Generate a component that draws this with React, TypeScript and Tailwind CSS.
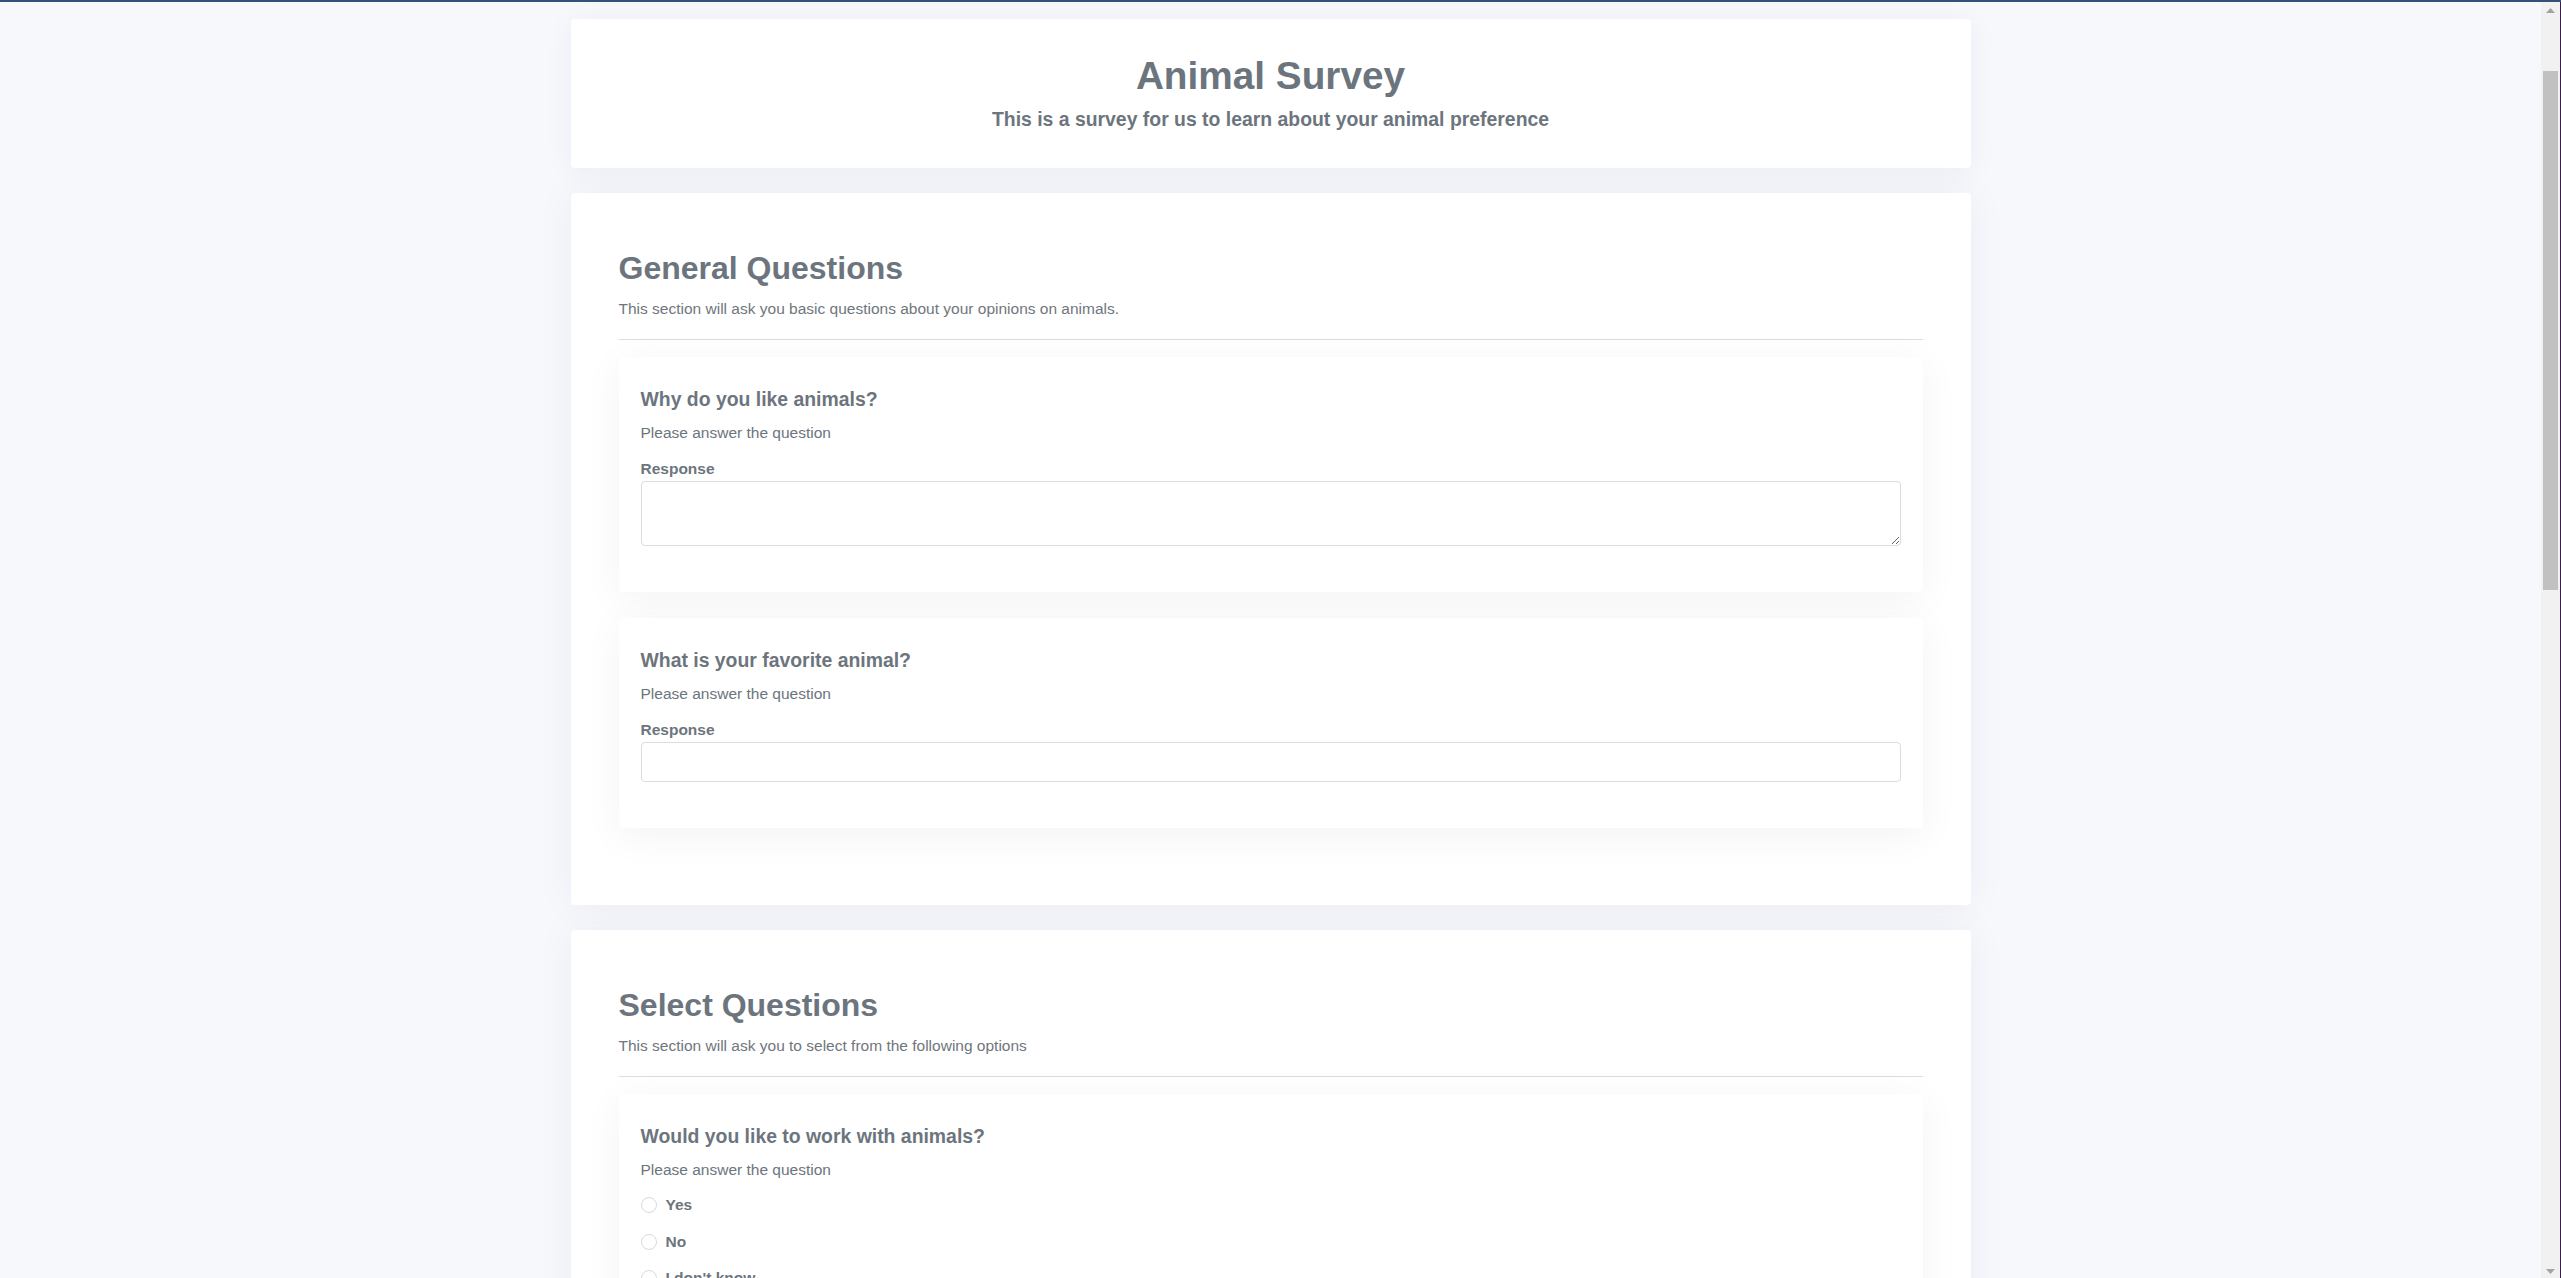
import React from "react";

const questionsGeneral = [
  { title: "Why do you like animals?", kind: "textarea" },
  { title: "What is your favorite animal?", kind: "input" },
];

function QuestionCard({ title, children }: { title: string; children: React.ReactNode }) {
  return (
    <div className="bg-white rounded-[4px] px-[22px] pt-[30px] pb-[46px] mb-[26px] shadow-[0_8px_40px_rgba(0,0,0,0.05)]">
      <h3 className="text-[19.4px] leading-[24px] font-bold text-[#6c757d]">{title}</h3>
      <p className="mt-[12px] text-[15.5px] leading-[20px] text-[#6c757d]">Please answer the question</p>
      {children}
    </div>
  );
}

function Section({ title, description, children }: { title: string; description: string; children: React.ReactNode }) {
  return (
    <section className="bg-white rounded-[4px] px-12 pt-[57px] pb-[51px] shadow-[0_0_40px_rgba(20,30,80,0.05)] flow-root">
      <h2 className="text-[32px] leading-[36px] font-bold text-[#6c757d]">{title}</h2>
      <p className="mt-[13px] text-[15.5px] leading-[20px] text-[#6f767d]">{description}</p>
      <hr className="mt-[20px] mb-[17px] border-0 h-px bg-[#dddddd]" />
      {children}
    </section>
  );
}

function Radio({ label }: { label: string }) {
  return (
    <label className="flex items-center h-5 gap-[9px]">
      <input type="radio" name="work" className="appearance-none w-4 h-4 rounded-full border border-[#d6d9de] bg-white" />
      <span className="text-[15.5px] font-bold text-[#6c757d]">{label}</span>
    </label>
  );
}

function Scrollbar() {
  return (
    <div className="flex h-screen shrink-0">
      <div className="w-[19px] flex flex-col bg-[#f1f1f1]">
        <div className="h-[17px] flex items-center justify-center">
          <svg width="9" height="5" viewBox="0 0 9 5"><path d="M0 5 L4.5 0 L9 5 Z" fill="#a3a3a3" /></svg>
        </div>
        <div className="flex-1 pt-[52px] px-[2px]">
          <div className="h-[519px] bg-[#c1c1c1]" />
        </div>
        <div className="h-[17px] flex items-center justify-center">
          <svg width="9" height="5" viewBox="0 0 9 5"><path d="M0 0 L4.5 5 L9 0 Z" fill="#a3a3a3" /></svg>
        </div>
      </div>
      <div className="w-px bg-[#3b1d4a]" />
    </div>
  );
}

export default function App() {
  return (
    <div className="h-screen flex border-t-2 border-[#36507a] bg-[#f7f8fc] font-['Liberation_Sans',Arial,sans-serif]">
      <div className="flex-1 overflow-hidden">
        <div className="w-[1400px] mx-auto pt-[17px] pb-20 flex flex-col gap-[25px]">
          <header className="bg-white rounded-[4px] pt-[35px] pb-[37px] text-center text-[#6c757d] shadow-[0_4px_30px_rgba(20,30,80,0.05)]">
            <h1 className="text-[38.75px] leading-[44px] font-bold">Animal Survey</h1>
            <p className="mt-[9px] text-[19.4px] leading-[24px] font-bold">This is a survey for us to learn about your animal preference</p>
          </header>

          <Section title="General Questions" description="This section will ask you basic questions about your opinions on animals.">
            {questionsGeneral.map((q) => (
              <QuestionCard key={q.title} title={q.title}>
                <label className="block mt-[16px] text-[15.5px] leading-[20px] font-bold text-[#6c757d]">Response</label>
                {q.kind === "textarea" ? (
                  <textarea className="block mt-[2px] w-full h-[65px] border border-[#dcdcdc] rounded-[4px] bg-white" />
                ) : (
                  <input type="text" className="block mt-[2px] w-full h-10 border border-[#dcdcdc] rounded-[4px] bg-white" />
                )}
              </QuestionCard>
            ))}
          </Section>

          <Section title="Select Questions" description="This section will ask you to select from the following options">
            <QuestionCard title="Would you like to work with animals?">
              <div className="mt-[15px] flex flex-col gap-[16.5px]">
                <Radio label="Yes" />
                <Radio label="No" />
                <Radio label="I don't know" />
              </div>
            </QuestionCard>
          </Section>
        </div>
      </div>
      <Scrollbar />
    </div>
  );
}
